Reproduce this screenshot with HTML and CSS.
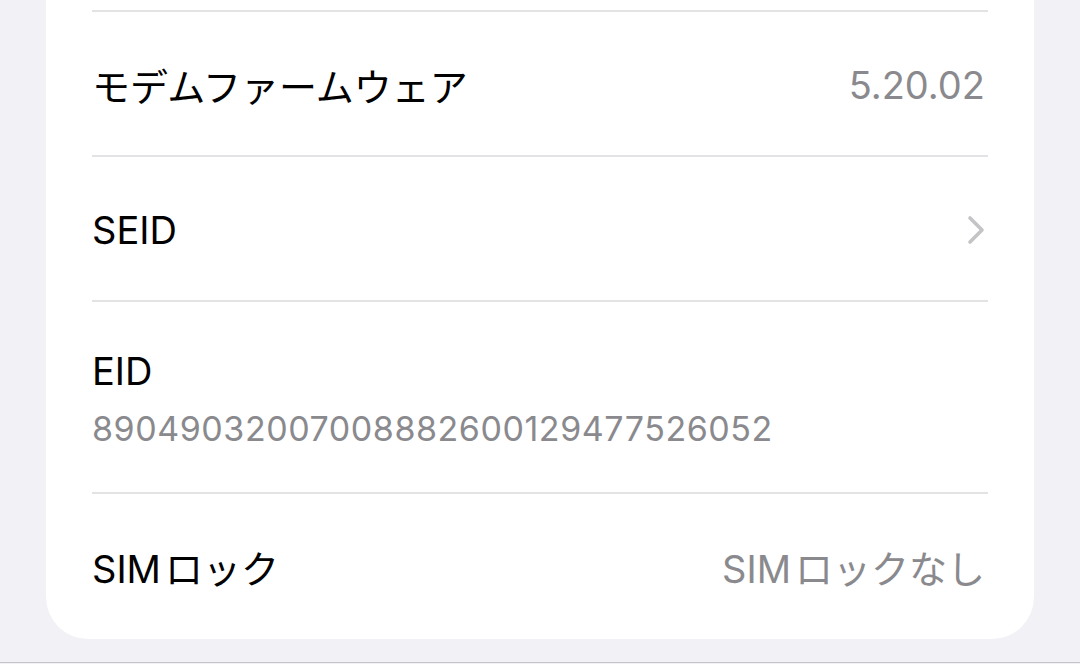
FILE: index.html
```html
<!DOCTYPE html>
<html lang="ja">

<head>
	<meta charset="utf-8">
	<title>情報</title>
	<link rel="stylesheet" href="styles.css">
</head>

<body>
	<div class="page">
		<div class="group">
			<div class="row">
				<span class="label">モデムファームウェア</span>
				<span class="value">5.20.02</span>
			</div>
			<div class="row">
				<span class="label">SEID</span>
				<svg class="chevron" width="18" height="30" viewBox="0 0 18 30">
					<path d="M3 3 L15 15 L3 27" fill="none" stroke="#c4c4c7" stroke-width="3.6" stroke-linecap="round" stroke-linejoin="round"/>
				</svg>
			</div>
			<div class="row row-stacked">
				<span class="label">EID</span>
				<span class="sub">89049032007008882600129477526052</span>
			</div>
			<div class="row">
				<span class="label"><span class="latin">SIM</span>ロック</span>
				<span class="value"><span class="latin">SIM</span>ロックなし</span>
			</div>
		</div>
	</div>
</body>

</html>
```
FILE: styles.css
```css
body {
	margin: 0;
	padding: 0;
	background-color: #f2f1f6;
	font-family: Inter, "Noto Sans CJK JP", sans-serif;
	color: #000;
}

.page {
	height: 663px;
	padding: 0 46px;
	border-bottom: 1px solid #c4c4c6;
	box-sizing: border-box;
}

.group {
	background-color: #fff;
	border-radius: 0 0 42px 42px;
	padding: 10px 46px 2px;
}

.row {
	display: flex;
	align-items: center;
	justify-content: space-between;
	height: 145px;
	border-top: 2px solid #e3e3e6;
	box-sizing: border-box;
	padding-top: 2px;
}

.row-stacked {
	flex-direction: column;
	align-items: flex-start;
	justify-content: center;
	height: 192px;
	padding-top: 2px;
}

.label {
	font-size: 38px;
}

.value {
	font-size: 38px;
	color: #8a8a8e;
	margin-right: 3px;
}

.latin {
	margin-right: 4px;
}

.sub {
	font-size: 34px;
	color: #8a8a8e;
	margin-top: 14px;
	letter-spacing: 0.55px;
}

.chevron {
	margin-right: 3px;
}
```
